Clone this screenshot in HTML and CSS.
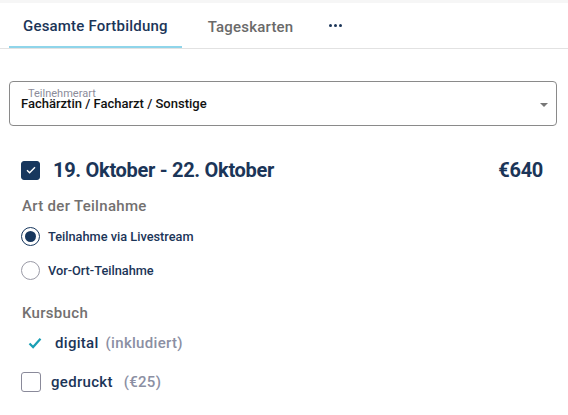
FILE: index.html
```html
<!DOCTYPE html>
<html lang="de">
<head>
  <meta charset="UTF-8">
  <title>Anmeldung</title>
  <link rel="stylesheet" href="styles.css">
</head>
<body>
  <div class="topstrip"></div>
  <nav class="tabs">
    <a class="tab active">Gesamte Fortbildung</a>
    <a class="tab">Tageskarten</a>
    <a class="tab more"><i></i><i></i><i></i></a>
  </nav>

  <main>
    <div class="select">
      <span class="select-label">Teilnehmerart</span>
      <span class="select-value">Fachärztin / Facharzt / Sonstige</span>
      <span class="select-arrow"></span>
    </div>

    <div class="event">
      <span class="check checked">
        <svg width="10" height="8" viewBox="0 0 10 8"><path d="M1 4.2l2.6 2.5L9 1.2" fill="none" stroke="#fff" stroke-width="1.4"/></svg>
      </span>
      <h2>19. Oktober - 22. Oktober</h2>
      <span class="price">€640</span>
    </div>

    <h3>Art der Teilnahme</h3>
    <label class="radio-row"><span class="radio on"></span>Teilnahme via Livestream</label>
    <label class="radio-row"><span class="radio"></span>Vor-Ort-Teilnahme</label>

    <h3 class="kurs">Kursbuch</h3>
    <div class="book-row included">
      <svg class="tick" width="14" height="12" viewBox="0 0 14 12"><path d="M1.5 6.5l3.6 3.6L12.5 1.8" fill="none" stroke="#1a9fb5" stroke-width="2.2"/></svg>
      <span class="book-name">digital</span>
      <span class="book-note">(inkludiert)</span>
    </div>
    <div class="book-row">
      <span class="check"></span>
      <span class="book-name">gedruckt</span>
      <span class="book-note">(€25)</span>
    </div>
  </main>
</body>
</html>
```

FILE: styles.css
```css
body { margin: 0; font-family: Roboto, "Noto Sans", sans-serif; background: #fff; color: #1b3558; }
.topstrip { height: 3px; background: #f6f6f6; }

.tabs { display: flex; border-bottom: 1px solid #e2e2e2; height: 45px; padding-left: 9px; }
.tab { display: flex; align-items: center; font-size: 15px; font-weight: 500; color: #6a6a6a; padding: 2px 14px 0; height: 45px; box-sizing: border-box; letter-spacing: 0.2px; }
.tab.active { color: #1b3558; border-bottom: 2px solid #8fd5ea; }
.tab:nth-child(2) { margin-left: 12px; }
.tab.more { margin-left: 8px; gap: 2px; padding-top: 0; }
.tab.more i { width: 3px; height: 3px; border-radius: 50%; background: #1b3558; }

main { padding: 32px 11px 0 9px; }

.select { position: relative; height: 43px; border: 1px solid #8a8a8a; border-radius: 4px; }
.select-label { position: absolute; left: 18px; top: 5px; font-size: 11px; color: #8c8c9a; }
.select-value { position: absolute; left: 11px; top: 14px; font-size: 13px; font-weight: 500; color: #111; }
.select-arrow { position: absolute; right: 8px; top: 21px; border-left: 4px solid transparent; border-right: 4px solid transparent; border-top: 4px solid #777; }

.event { display: flex; align-items: center; margin: 34px 0 0 12px; height: 20px; }
.event h2 { margin: 0 0 0 13px; font-size: 20px; font-weight: 700; color: #1b3558; flex: 1; letter-spacing: -0.3px; }
.price { font-size: 20px; font-weight: 700; color: #1b3558; letter-spacing: -0.3px; padding-right: 14px; }

.check { width: 19px; height: 19px; box-sizing: border-box; border: 1px solid #8a8a9a; border-radius: 3px; display: inline-flex; align-items: center; justify-content: center; flex: none; }
.check.checked { background: #17375e; border-color: #17375e; }

h3 { margin: 17px 0 0 13px; font-size: 15px; line-height: 18px; font-weight: 500; color: #737070; letter-spacing: 0.3px; }

.radio-row { display: flex; align-items: center; margin: 12px 0 0 12px; font-size: 12.75px; font-weight: 500; color: #1b3558; height: 19px; }
.radio-row + .radio-row { margin-top: 15px; }
.radio { width: 19px; height: 19px; box-sizing: border-box; border: 1px solid #9a9aa6; border-radius: 50%; margin-right: 8px; display: inline-flex; align-items: center; justify-content: center; }
.radio.on { border: 1.5px solid #17375e; }
.radio.on::after { content: ""; width: 11px; height: 11px; border-radius: 50%; background: #17375e; }

h3.kurs { margin-top: 24px; }

.book-row { display: flex; align-items: center; margin: 11px 0 0 12px; font-size: 15px; font-weight: 500; height: 20px; }
.book-row .check { width: 20px; height: 20px; margin-right: 10px; }
.tick { margin: 0 13px 0 7px; }
.book-name { color: #1b3558; letter-spacing: 0.3px; }
.book-note { color: #8b8fa3; margin-left: 11px; letter-spacing: 0.3px; }
.book-row + .book-row { margin-top: 19px; }
.included .book-note { margin-left: 7px; }
```
